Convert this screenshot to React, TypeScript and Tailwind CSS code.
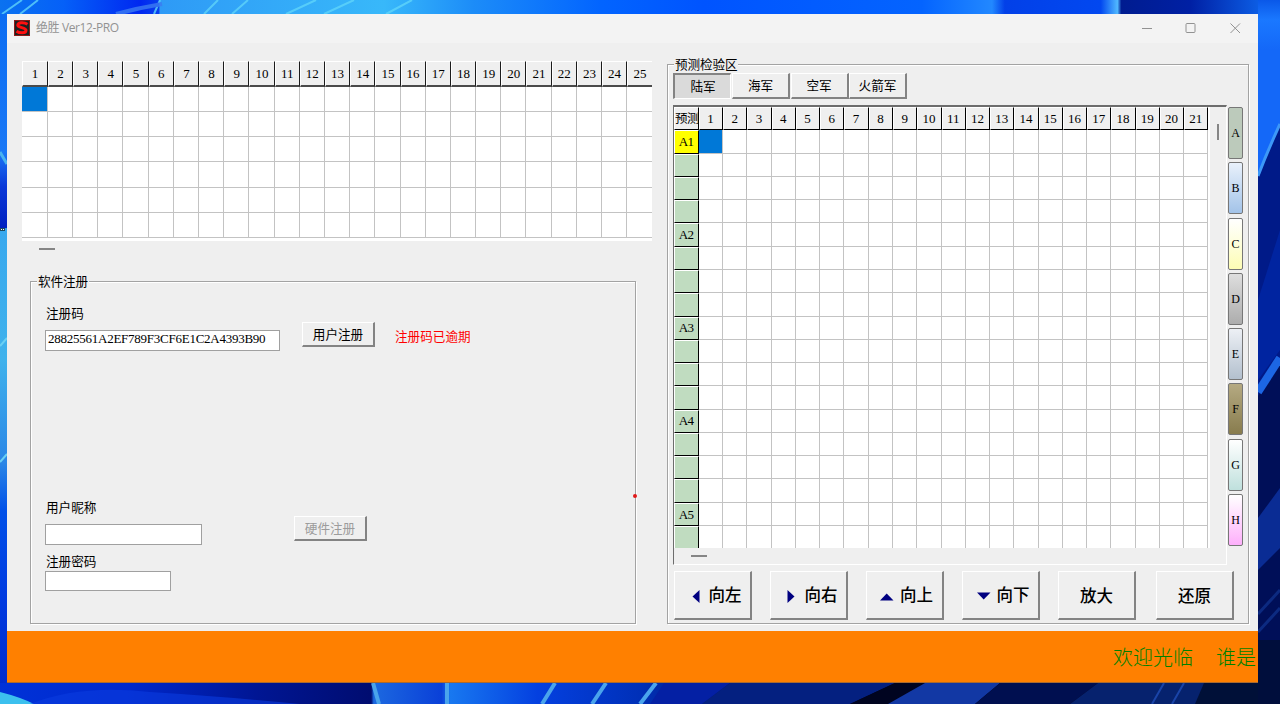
import type { ReactNode } from "react";

type SideTab = {
  letter: string
  className: string
}

const sideTabs: SideTab[] = [
  { letter: "A", className: "bg-[#bccabb]" },
  { letter: "B", className: "bg-linear-to-b from-[#e9f1fb] to-[#a3c3e8]" },
  { letter: "C", className: "bg-linear-to-b from-[#ffffff] to-[#fdfdb4]" },
  { letter: "D", className: "bg-linear-to-b from-[#dedede] to-[#adadad]" },
  { letter: "E", className: "bg-linear-to-b from-[#edf0f5] to-[#b3c0ce]" },
  { letter: "F", className: "bg-linear-to-b from-[#b5aa82] to-[#887c4e]" },
  { letter: "G", className: "bg-linear-to-b from-[#ffffff] to-[#bfe0dd]" },
  { letter: "H", className: "bg-linear-to-b from-[#ffffff] to-[#fdaffb]" },
]

const armies = ["陆军", "海军", "空军", "火箭军"]

function Wallpaper(){
  return(
    <svg className="absolute inset-0" width="1280" height="704" viewBox="0 0 1280 704">
      <defs>
        <linearGradient id="top" x1="0" x2="1">
          <stop offset="0" stopColor="#0a72f0"/>
          <stop offset=".05" stopColor="#0560f8"/>
          <stop offset=".11" stopColor="#0028f0"/>
          <stop offset=".124" stopColor="#0840ee"/>
          <stop offset=".125" stopColor="#2e9af6"/>
          <stop offset=".3" stopColor="#38b8fa"/>
          <stop offset=".37" stopColor="#1c8cf8"/>
          <stop offset=".47" stopColor="#0264ff"/>
          <stop offset=".55" stopColor="#0054ff"/>
          <stop offset=".72" stopColor="#0464ff"/>
          <stop offset=".775" stopColor="#2288ff"/>
          <stop offset=".785" stopColor="#0240e8"/>
          <stop offset=".86" stopColor="#0248f0"/>
          <stop offset=".873" stopColor="#50b8ff"/>
          <stop offset=".876" stopColor="#001c90"/>
          <stop offset=".93" stopColor="#0020a4"/>
          <stop offset="1" stopColor="#1070f8"/>
        </linearGradient>
        <linearGradient id="left" x1="0" y1="0" x2="0" y2="1">
          <stop offset="0" stopColor="#0a6cf2"/>
          <stop offset=".2" stopColor="#1a78f6"/>
          <stop offset=".25" stopColor="#0a38d8"/>
          <stop offset=".31" stopColor="#0020c0"/>
          <stop offset=".311" stopColor="#38a8ee"/>
          <stop offset=".5" stopColor="#3fb2ec"/>
          <stop offset=".65" stopColor="#2a86e6"/>
          <stop offset=".72" stopColor="#0050e8"/>
          <stop offset=".85" stopColor="#003ae0"/>
          <stop offset="1" stopColor="#0028c8"/>
        </linearGradient>
        <linearGradient id="right" x1="0" y1="0" x2="0" y2="1">
          <stop offset="0" stopColor="#0a58e8"/>
          <stop offset=".1" stopColor="#1a78ff"/>
          <stop offset=".25" stopColor="#1468f8"/>
        </linearGradient>
        <linearGradient id="bottom" x1="0" x2="1">
          <stop offset="0" stopColor="#0032d8"/>
          <stop offset=".1" stopColor="#0028cc"/>
          <stop offset=".2" stopColor="#001694"/>
          <stop offset=".29" stopColor="#000c70"/>
          <stop offset=".292" stopColor="#1c68e0"/>
          <stop offset=".345" stopColor="#0a40d8"/>
          <stop offset=".352" stopColor="#1878f0"/>
          <stop offset=".42" stopColor="#0440e0"/>
          <stop offset=".5" stopColor="#0030b8"/>
          <stop offset=".57" stopColor="#001470"/>
          <stop offset=".68" stopColor="#000418"/>
        </linearGradient>
      </defs>
      <rect width="1280" height="14" fill="url(#top)"/>
      <g fill="none" stroke="#5fd4fa" strokeWidth="2" opacity=".8">
        <path d="M22 0L2 14M38 0Q28 8 20 14M160 0L154 14M218 0L204 14M248 0L232 14M316 0L286 14M354 0L324 14M412 0L386 14"/>
        <path d="M162 4Q138 8 116 14" stroke="#3c7cf2" strokeWidth="4"/>
      </g>
      <rect y="14" width="8" height="690" fill="url(#left)"/>
      <path d="M0 152L7 164" stroke="#49b4f0" strokeWidth="3"/>
      <path d="M0 346L7 338M0 462L7 454" stroke="#6ad0f4" strokeWidth="2"/>
      <path d="M0 228h5v3h-5z" fill="#1e4a60"/>
      <path d="M1 229h1v1h-1zM3 229h1v1h-1z" fill="#ffffff"/>
      <rect y="683" width="1280" height="21" fill="url(#bottom)"/>
      <path d="M0 692Q20 697 34 704H0Z" fill="#3cc0ee"/>
      <path d="M30 704Q80 684 150 692Q230 697 300 704Z" fill="#0a3ce0" opacity=".6"/>
      <g fill="none" stroke="#4aa4ec" strokeWidth="4">
        <path d="M373 683L379 704M447 683V704M555 683L542 704M606 683L592 704M656 683L640 704"/>
      </g>
      <path d="M664 683H730L702 704H650Z" fill="#0420a4"/>
      <path d="M730 683H895L850 704H702Z" fill="#042080"/>
      <path d="M895 683H925L888 704H850Z" fill="#000420"/>
      <path d="M925 683H1000L975 704H888Z" fill="#1238a4"/>
      <path d="M1000 683H1098L1070 704H975Z" fill="#000f50"/>
      <path d="M1098 683H1280V704H1070Z" fill="#06226e"/>
      <path d="M1204 683H1280V704H1195Z" fill="#001038"/>
      <path d="M1164 683L1152 704M1184 683L1172 704" stroke="#1a44a8" strokeWidth="2"/>
      <rect x="1258" y="0" width="22" height="200" fill="url(#right)"/>
      <path d="M1280 124Q1268 150 1258 176V704H1280Z" fill="#001a88"/>
      <path d="M1280 124Q1268 150 1258 176" fill="none" stroke="#3c98f8" strokeWidth="3"/>
      <path d="M1280 230L1258 300V380L1280 350Z" fill="#0024a0"/>
      <path d="M1280 362L1258 396V704H1280Z" fill="#000f58"/>
      <path d="M1280 358L1258 392" stroke="#1c66e4" strokeWidth="8"/>
      <path d="M1280 488L1258 518V570L1280 548Z" fill="#0a2c94"/>
      <path d="M1280 590L1258 614M1280 608L1258 632" stroke="#0c2a80" strokeWidth="3"/>
      <path d="M1258 640H1280V704H1258Z" fill="#000e3c"/>
    </svg>
  )
}

function GroupBox({ title, className, children }: { title: string, className: string, children: ReactNode }){
  return(
    <fieldset className={"min-w-0 border border-[#a3a3a3] shadow-[1px_1px_0_#fff,inset_1px_1px_0_#fff] " + className}>
      <legend className="ml-[6px] h-[18px] bg-[#efefef] px-px pt-px leading-[18px] tracking-[-0.1px] whitespace-nowrap">{title}</legend>
      {children}
    </fieldset>
  )
}

function RaisedButton({ className, children }: { className: string, children: ReactNode }){
  return(
    <button className={"flex shrink-0 items-center justify-center border-t border-l border-r-2 border-b-2 border-t-white border-l-white border-r-[#838383] border-b-[#838383] bg-[#efefef] whitespace-nowrap " + className}>
      {children}
    </button>
  )
}

function MainGrid(){
  return(
    <div className="h-[179.5px] w-[630px] overflow-hidden bg-white">
      <div className="grid auto-rows-[25.2px] grid-cols-[25.9px_repeat(23,25.2px)_24.5px] grid-rows-[25.9px]">
        {Array.from({length:25}).map((_v,i)=>(
          <div key={i} className={"flex items-center justify-center border-t border-l border-b-2 border-t-white border-l-white border-b-[#4a4a4a] bg-[#efefef] text-[13px] " + (i<24?"border-r border-r-[#1c1c1c]":"")}>{i+1}</div>
        ))}
        {Array.from({length:150}).map((_v,i)=>(
          <div key={i} className={"border-b border-b-[#c3c3c3] " + (i%25<24?"border-r border-r-[#c3c3c3] ":"") + (i==0?"bg-[#0078d7]":"")}></div>
        ))}
      </div>
    </div>
  )
}

function RowHead({ row }: { row: number }){
  return(
    <div className={"flex items-center justify-center border border-t-white border-l-white border-r-black border-b-black pr-px text-[13px] tracking-[-0.8px] " + (row==0?"bg-[#ffff00]":"bg-[#c0dcc0]")}>
      {row%4==0?"A"+(row/4+1):""}
    </div>
  )
}

function ForecastGrid(){
  return(
    <div className="h-[460px] w-[554px] shrink-0 border-t-2 border-r border-b border-l border-t-[#6d6d6d] border-r-white border-b-white border-l-[#6d6d6d]">
      <div className="flex">
        <div className="h-[441px] w-[536px] overflow-hidden bg-white">
          <div className="grid auto-rows-[23.28px] grid-cols-[24.9px_repeat(21,24.28px)] grid-rows-[23.4px]">
            <div className="overflow-hidden border border-t-white border-l-white border-r-black border-b-black bg-[#efefef] text-[12.5px] leading-[22px] tracking-[-0.5px] whitespace-nowrap">预测</div>
            {Array.from({length:21}).map((_v,i)=>(
              <div key={i} className="flex items-center justify-center border border-t-white border-l-white border-r-black border-b-black bg-[#efefef] pr-px text-[13px]">{i+1}</div>
            ))}
            {Array.from({length:18}).map((_v,row)=>(
              <div key={row} className="contents">
                <RowHead row={row}/>
                {Array.from({length:21}).map((_c,col)=>(
                  <div key={col} className={"border-r border-b border-[#c3c3c3] " + (row==0&&col==0?"bg-[#0078d7]":"")}></div>
                ))}
              </div>
            ))}
          </div>
        </div>
        <div className="mt-[17px] ml-[7px] h-4 w-[2px] bg-[#858585]"></div>
      </div>
      <div className="mt-[7px] ml-[17px] h-[2px] w-4 bg-[#858585]"></div>
    </div>
  )
}

function RegisterPanel(){
  return(
    <GroupBox title="软件注册" className="mt-[22px] ml-2 h-[352px] w-[606px]">
      <div className="flex items-start pt-[15px] pl-[14px] leading-4">
        <div className="w-[235px]">
          <p className="pt-px pl-px">注册码</p>
          <div className="mt-2 h-[21px] border border-[#a0a0a0] bg-white pl-[2px] text-[13px] leading-[15px] tracking-[-0.25px]">28825561A2EF789F3CF6E1C2A4393B90</div>
        </div>
        <RaisedButton className="mt-[17px] ml-[22px] h-[25px] w-[73px] pt-[2px]">用户注册</RaisedButton>
        <p className="mt-6 ml-5 text-[#ff0000]">注册码已逾期</p>
      </div>
      <div className="mt-[148px] flex items-start pl-[14px] leading-4">
        <div className="w-[157px]">
          <p className="pt-px pl-px">用户昵称</p>
          <div className="mt-2 h-[21px] border border-[#a0a0a0] bg-white"></div>
          <p className="mt-[9px] pl-px">注册密码</p>
          <div className="mt-px h-5 w-[126px] border border-[#a0a0a0] bg-white"></div>
        </div>
        <RaisedButton className="mt-[17px] ml-[92px] h-[25px] w-[73px] pt-[2px] text-[#9c9c9c]">硬件注册</RaisedButton>
      </div>
    </GroupBox>
  )
}

function Arrow({ d, className }: { d: string, className: string }){
  return(
    <svg className={"shrink-0 fill-[#000080] " + className} width="14" height="14" viewBox="0 0 14 14">
      <path d={d}/>
    </svg>
  )
}

function ForecastPanel(){
  return(
    <GroupBox title="预测检验区" className="mt-3 ml-[15px] h-[569px] w-[582px] shrink-0">
      <div className="flex pl-[5px]">
        {armies.map((army,i)=>(
          i==0
            ? <button key={army} className="mr-px flex h-[26px] w-[58px] items-center justify-center border-t-2 border-r border-b border-l-2 border-t-[#838383] border-r-white border-b-white border-l-[#838383] bg-[#dadada] pt-px pl-px">{army}</button>
            : <RaisedButton key={army} className="mr-[0.5px] h-[26px] w-[58px] pt-[2px]">{army}</RaisedButton>
        ))}
      </div>
      <div className="mt-[6px] flex gap-px pl-[5px]">
        <ForecastGrid/>
        <div className="flex flex-col gap-[3.3px] pt-[2px]">
          {sideTabs.map((tab)=>(
            <button key={tab.letter} className={"flex h-[52px] w-[15px] shrink-0 items-center justify-center rounded-xs border border-[#777] text-[12px] " + tab.className}>{tab.letter}</button>
          ))}
        </div>
      </div>
      <div className="mt-[6px] flex gap-[18px] pl-[6px] text-[16.5px] font-medium">
        <RaisedButton className="h-[49px] w-[78px] pt-[3px]"><Arrow className="mr-1 ml-[7px]" d="M8.5 0V13L1.5 6.5Z"/>向左</RaisedButton>
        <RaisedButton className="h-[49px] w-[78px] pt-[3px]"><Arrow className="mr-1 ml-[7px]" d="M.5 0V13L7.5 6.5Z"/>向右</RaisedButton>
        <RaisedButton className="h-[49px] w-[78px] pt-[3px]"><Arrow className="mr-[6px] ml-1" d="M0 10.5H13.5L6.7 3.5Z"/>向上</RaisedButton>
        <RaisedButton className="h-[49px] w-[78px] pt-[3px]"><Arrow className="mr-[6px] ml-[5px]" d="M0 2.5H13.5L6.7 9.5Z"/>向下</RaisedButton>
        <RaisedButton className="h-[49px] w-[78px] pt-[4px]">放大</RaisedButton>
        <RaisedButton className="ml-[2px] h-[49px] w-[78px] pt-[4px]">还原</RaisedButton>
      </div>
    </GroupBox>
  )
}

function TitleBar(){
  return(
    <div className="flex h-[29px] items-center bg-[#f3f3f3] pl-[7px] text-[#929292]">
      <svg className="-mt-[2px]" width="16" height="16" viewBox="0 0 16 16">
        <rect width="16" height="16" fill="#8a1c1a"/>
        <rect x="1" y="1" width="14" height="14" fill="#1c2222"/>
        <path d="M13.5 4.2C10 1.8 3.5 2.2 3.8 5.2C4 8 11.8 7.2 12 10.2C12 13.4 6 13.6 2.5 11.2" fill="none" stroke="#ff1010" strokeWidth="3"/>
      </svg>
      <p className="-mt-px ml-[6px] font-['Open_Sans','Noto_Sans_CJK_SC',sans-serif] text-[12px] tracking-[-0.4px]">绝胜 Ver12-PRO</p>
      <svg className="-mt-[2px] ml-auto" width="116" height="14" viewBox="0 0 116 14" fill="none" stroke="#929292">
        <path d="M0 7.5H10"/>
        <rect x="44" y="2.5" width="9" height="9" rx="1"/>
        <path d="M88.5 2.5L98 12M98 2.5L88.5 12"/>
      </svg>
    </div>
  )
}

function App(){
  return(
    <div className="relative h-[704px] w-[1280px] overflow-hidden bg-[#0040e0] pt-[14px] pl-[7px] font-['Liberation_Serif','Noto_Sans_CJK_SC',serif] text-[12.6px] text-black">
      <Wallpaper/>
      <div className="relative h-[669px] w-[1251px] overflow-hidden border-b border-b-[#a86a30] bg-[#efefef]">
        <TitleBar/>
        <div className="flex h-[588px]">
          <div className="w-[645px] shrink-0 pt-[18px] pl-[15px]">
            <MainGrid/>
            <div className="mt-[7.5px] ml-[17px] h-[2px] w-4 bg-[#858585]"></div>
            <RegisterPanel/>
          </div>
          <ForecastPanel/>
        </div>
        <div className="flex h-[52px] items-center overflow-hidden bg-[#ff8000] pt-px pl-[1106px] text-[20px] font-light whitespace-nowrap text-[#008000]">
          <p>欢迎光临</p>
          <p className="ml-[23px]">谁是</p>
        </div>
        {/* recording marker that sits on the group box edge */}
        <div className="absolute top-[480px] left-[626px] size-1 rounded-full bg-[#e01818]"></div>
      </div>
    </div>
  )
}

export default App
